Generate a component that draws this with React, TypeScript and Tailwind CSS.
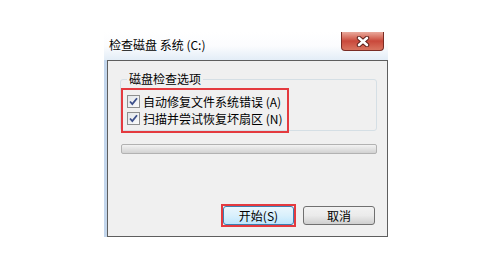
import React from "react";

const cjk = { fontFamily: '"Noto Sans CJK SC", "Noto Sans", sans-serif' };

function Check() {
  return (
    <div className="w-[13px] h-[13px] border border-[#8e8f8f] bg-gradient-to-br from-[#e2e6ea] to-[#fbfbfb] flex items-center justify-center shrink-0">
      <svg width="11" height="11" viewBox="0 0 11 11">
        <path d="M2 5.5 L4.3 8 L9 2.2" fill="none" stroke="#3c4f8a" strokeWidth="1.8" />
      </svg>
    </div>
  );
}

export default function App() {
  return (
    <div className="w-[491px] h-[265px] bg-white overflow-hidden" style={cjk}>
      <div className="ml-[104px] pt-[32px] w-[284px]">
        {/* title bar */}
        <div className="h-[28px] flex items-start bg-gradient-to-b from-[#ffffff] via-[#fbfcfe] to-[#e3edf7]">
          <div className="pl-[5px] pt-[5px] text-[12px] leading-[16px] text-black">检查磁盘 系统 (C:)</div>
          <div className="ml-auto mr-[4px] w-[43px] h-[19px] rounded-b-[4px] border border-t-0 border-[#7a2c24] bg-gradient-to-b from-[#e9a99c] via-[#c9483b] to-[#d8735f] flex items-center justify-center">
            <svg width="14" height="11" viewBox="0 0 14 11">
              <path d="M3 2 L11 9 M11 2 L3 9" stroke="#5a1e18" strokeWidth="4.4" strokeLinecap="round" />
              <path d="M3 2 L11 9 M11 2 L3 9" stroke="#ffffff" strokeWidth="2.6" strokeLinecap="round" />
            </svg>
          </div>
        </div>
        {/* body */}
        <div className="flex">
          <div className="w-[3px] bg-[#c3d6ec]" />
          <div className="w-[281px] h-[177px] border border-[#5e5e5e] bg-[#f0f0f0] flex flex-col">
            <fieldset className="ml-[12px] mt-[10px] w-[257px] border border-[#d5dfe5] rounded-[3px] pb-0">
              <legend className="ml-[6px] px-[2px] text-[12px] leading-[16px] text-black">磁盘检查选项</legend>
              <div className="mt-[1px] w-[168px] border-2 border-[#e43a3f] pt-[3px] pb-[4px] pl-[4px] -mb-[3px] relative">
                <div className="h-[17px] flex items-center gap-[3px] text-[12px] text-black">
                  <Check />
                  <span>自动修复文件系统错误 (A)</span>
                </div>
                <div className="h-[17px] flex items-center gap-[3px] text-[12px] text-black">
                  <Check />
                  <span>扫描并尝试恢复坏扇区 (N)</span>
                </div>
              </div>
            </fieldset>
            <div className="ml-[13px] mt-[13px] w-[256px] h-[10px] rounded-[2px] border border-[#b2b2b2] bg-gradient-to-b from-[#f3f3f3] via-[#e2e2e2] to-[#d2d2d2]" />
            <div className="mt-[50px] mr-[12px] flex justify-end items-center gap-[7px]">
              <div className="border-2 border-[#e43a3f]">
                <div className="w-[71px] h-[19px] rounded-[3px] border border-[#3c7fb1] bg-gradient-to-b from-[#eaf6fd] via-[#d9f0fc] to-[#bee6fd] flex items-center justify-center text-[12px] leading-none text-black">
                  开始(S)
                </div>
              </div>
              <div className="w-[72px] h-[19px] rounded-[3px] border border-[#707070] bg-gradient-to-b from-[#f2f2f2] via-[#ebebeb] to-[#cfcfcf] flex items-center justify-center text-[12px] leading-none text-black">
                取消
              </div>
            </div>
          </div>
        </div>
      </div>
    </div>
  );
}
